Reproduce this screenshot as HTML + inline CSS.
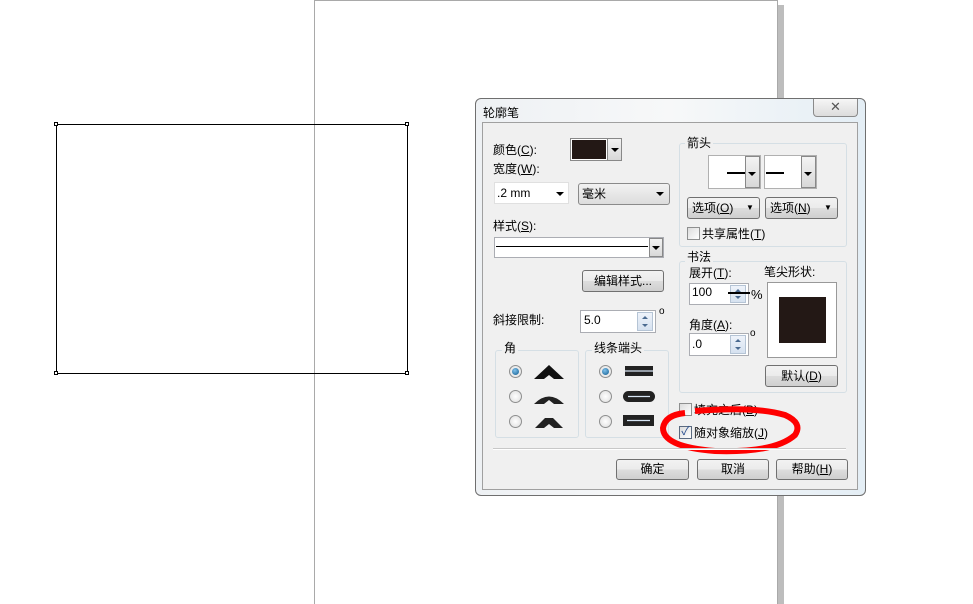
<!DOCTYPE html>
<html><head><meta charset="utf-8"><style>
*{margin:0;padding:0;box-sizing:border-box}
body{width:973px;height:604px;background:#fff;position:relative;overflow:hidden;font-family:"Liberation Sans","Noto Sans CJK SC",sans-serif;font-size:12px;color:#000}
.a{position:absolute}
.t{position:absolute;white-space:nowrap;line-height:14px}
.btn{position:absolute;border:1px solid #707070;border-radius:3px;background:linear-gradient(#f2f2f2,#ebebeb 50%,#dddddd 51%,#cfcfcf);text-align:center;line-height:18px}
.grp{position:absolute;border:1px solid #d5dfe5;border-radius:3px}
.gt{position:absolute;background:#f0f0f0;padding:0 2px;line-height:14px}
.cb{position:absolute;width:13px;height:13px;border:1px solid #8e8f8f;background:linear-gradient(135deg,#dcdcdc,#fff)}
.rd{position:absolute;width:13px;height:13px;border:1px solid #8e8f8f;border-radius:50%;background:radial-gradient(#fff,#dcdcdc)}
.rd.on::after{content:"";position:absolute;left:2px;top:2px;width:7px;height:7px;border-radius:50%;background:radial-gradient(circle at 40% 35%,#7fc0ea,#0d5a8f)}
.in{position:absolute;background:#fff;border:1px solid #abadb3}
.dd{position:absolute;width:0;height:0;border-left:4px solid transparent;border-right:4px solid transparent;border-top:4px solid #000}
.spin{position:absolute;width:16px;border:1px solid #b5c4d5;background:linear-gradient(#eef3fa,#d6e2f0)}
.spin::before{content:"";position:absolute;left:4px;top:3px;border-left:3px solid transparent;border-right:3px solid transparent;border-bottom:3px solid #4a6a90}
.spin::after{content:"";position:absolute;left:4px;bottom:3px;border-left:3px solid transparent;border-right:3px solid transparent;border-top:3px solid #4a6a90}
</style></head><body>
<div class="a" style="left:314px;top:0;width:464px;height:604px;border-left:1px solid #a9a9a9;border-right:1px solid #a9a9a9;border-top:1px solid #a9a9a9"></div>
<div class="a" style="left:778px;top:5px;width:6px;height:599px;background:#bdbdbd"></div>
<div class="a" style="left:56px;top:124px;width:352px;height:250px;border:1px solid #000"></div>
<div class="a" style="left:54px;top:122px;width:4px;height:4px;border:1px solid #000;background:#fff"></div>
<div class="a" style="left:405px;top:122px;width:4px;height:4px;border:1px solid #000;background:#fff"></div>
<div class="a" style="left:54px;top:371px;width:4px;height:4px;border:1px solid #000;background:#fff"></div>
<div class="a" style="left:405px;top:371px;width:4px;height:4px;border:1px solid #000;background:#fff"></div>
<div class="a" style="left:475px;top:98px;width:391px;height:398px;border:1px solid #6f6f6f;border-radius:6px;background:linear-gradient(90deg,#eef1f4,#f7f8f9 50%,#e4eef5)"></div>
<div class="t" style="left:483px;top:106px;font-size:12px">轮廓笔</div>
<div class="a" style="left:813px;top:99px;width:45px;height:18px;border:1px solid #8a8a8a;border-top:none;border-radius:0 0 4px 4px;background:linear-gradient(#f6f6f6,#dcdcdc);text-align:center;color:#555;font-size:13px;line-height:16px">✕</div>
<div class="a" style="left:482px;top:122px;width:376px;height:368px;background:#f0f0f0;border:1px solid #a0a0a0"></div>

<div class="t" style="left:493px;top:143px">颜色(<u>C</u>):</div>
<div class="a" style="left:570px;top:138px;width:38px;height:23px;border:1px solid #888;background:#fff;padding:1px"><div style="width:100%;height:100%;background:#231815"></div></div>
<div class="a" style="left:607px;top:138px;width:15px;height:23px;border:1px solid #888;background:linear-gradient(#f3f3f3,#d8d8d8)"></div><div class="dd" style="left:611px;top:148px"></div>
<div class="t" style="left:493px;top:162px">宽度(<u>W</u>):</div>
<div class="in" style="left:494px;top:182px;width:75px;height:22px;border-color:#e0e0e0"></div>
<div class="t" style="left:497px;top:186px">.2 mm</div><div class="dd" style="left:556px;top:192px"></div>
<div class="a" style="left:578px;top:183px;width:92px;height:22px;border:1px solid #8a8a8a;border-radius:3px;background:linear-gradient(#f2f2f2,#dcdcdc)"></div>
<div class="t" style="left:582px;top:187px">毫米</div><div class="dd" style="left:656px;top:192px"></div>
<div class="t" style="left:493px;top:219px">样式(<u>S</u>):</div>
<div class="in" style="left:494px;top:237px;width:170px;height:21px"></div>
<div class="a" style="left:496px;top:246px;width:152px;height:1px;background:#000"></div>
<div class="a" style="left:649px;top:238px;width:14px;height:19px;border:1px solid #888;background:linear-gradient(#f3f3f3,#d8d8d8)"></div><div class="dd" style="left:652px;top:246px"></div>
<div class="btn" style="left:582px;top:270px;width:82px;height:22px;line-height:20px">编辑样式...</div>
<div class="t" style="left:493px;top:313px">斜接限制:</div>
<div class="in" style="left:580px;top:310px;width:76px;height:23px"></div>
<div class="t" style="left:584px;top:313px">5.0</div>
<div class="spin" style="left:637px;top:312px;height:19px"></div>
<div class="t" style="left:659px;top:305px;font-size:10px">o</div>

<div class="grp" style="left:495px;top:350px;width:84px;height:88px"></div>
<div class="gt" style="left:502px;top:341px">角</div>
<div class="grp" style="left:585px;top:350px;width:84px;height:88px"></div>
<div class="gt" style="left:592px;top:341px">线条端头</div>
<div class="rd on" style="left:509px;top:365px"></div>
<div class="rd" style="left:509px;top:390px"></div>
<div class="rd" style="left:509px;top:415px"></div>
<div class="rd on" style="left:599px;top:365px"></div>
<div class="rd" style="left:599px;top:390px"></div>
<div class="rd" style="left:599px;top:415px"></div>
<svg class="a" style="left:534px;top:362px" width="32" height="70">
<polygon points="0,17 15,3 30,17 20,17 15,13 10,17" fill="#111"/>
<path d="M0,42 Q15,27 30,42 L20,42 L15,38 L10,42 Z" fill="#222"/>
<polygon points="1,66 11,56 19,56 29,66 20,66 15,62 10,66" fill="#222"/>
</svg>
<svg class="a" style="left:622px;top:362px" width="34" height="70">
<rect x="3" y="4" width="28" height="10" fill="#222"/><line x1="3" y1="9" x2="31" y2="9" stroke="#d8e6f5" stroke-width="1.2"/>
<rect x="1" y="29" width="32" height="11" rx="5.5" fill="#222"/><line x1="6" y1="34.5" x2="28" y2="34.5" stroke="#d8e6f5" stroke-width="1.2"/>
<rect x="1" y="53" width="31" height="11" fill="#222"/><line x1="5" y1="58.5" x2="28" y2="58.5" stroke="#d8e6f5" stroke-width="1.2"/>
</svg>

<div class="grp" style="left:679px;top:143px;width:168px;height:104px"></div>
<div class="gt" style="left:685px;top:136px">箭头</div>
<div class="in" style="left:708px;top:155px;width:53px;height:34px;border-color:#b0b0b0"></div>
<div class="a" style="left:727px;top:172px;width:18px;height:2px;background:#000"></div>
<div class="a" style="left:745px;top:156px;width:15px;height:32px;border:1px solid #888;background:linear-gradient(#f3f3f3,#d8d8d8)"></div><div class="dd" style="left:748px;top:172px"></div>
<div class="in" style="left:764px;top:155px;width:53px;height:34px;border-color:#b0b0b0"></div>
<div class="a" style="left:766px;top:172px;width:18px;height:2px;background:#000"></div>
<div class="a" style="left:801px;top:156px;width:15px;height:32px;border:1px solid #888;background:linear-gradient(#f3f3f3,#d8d8d8)"></div><div class="dd" style="left:804px;top:172px"></div>
<div class="btn" style="left:687px;top:197px;width:73px;height:22px;text-align:left;padding-left:4px;line-height:20px">选项(<u>O</u>)<span style="position:absolute;left:58px;top:0;font-size:8px">▼</span></div>
<div class="btn" style="left:765px;top:197px;width:73px;height:22px;text-align:left;padding-left:4px;line-height:20px">选项(<u>N</u>)<span style="position:absolute;left:58px;top:0;font-size:8px">▼</span></div>
<div class="cb" style="left:687px;top:227px"></div>
<div class="t" style="left:702px;top:227px">共享属性(<u>T</u>)</div>

<div class="grp" style="left:679px;top:261px;width:168px;height:132px"></div>
<div class="gt" style="left:685px;top:250px">书法</div>
<div class="t" style="left:689px;top:266px">展开(<u>T</u>):</div>
<div class="in" style="left:689px;top:283px;width:60px;height:22px"></div>
<div class="t" style="left:692px;top:285px">100</div>
<div class="spin" style="left:730px;top:285px;height:18px"></div>
<div class="a" style="left:728px;top:292px;width:22px;height:2px;background:#000"></div>
<div class="t" style="left:751px;top:288px;font-size:13px">%</div>
<div class="t" style="left:764px;top:265px">笔尖形状:</div>
<div class="a" style="left:767px;top:282px;width:70px;height:76px;border:1px solid #999;background:#fff"></div>
<div class="a" style="left:779px;top:297px;width:47px;height:46px;background:#231815"></div>
<div class="t" style="left:689px;top:318px">角度(<u>A</u>):</div>
<div class="in" style="left:689px;top:333px;width:60px;height:23px"></div>
<div class="t" style="left:692px;top:337px">.0</div>
<div class="spin" style="left:730px;top:335px;height:19px"></div>
<div class="t" style="left:750px;top:327px;font-size:10px">o</div>
<div class="btn" style="left:765px;top:365px;width:73px;height:22px;line-height:20px">默认(<u>D</u>)</div>

<div class="cb" style="left:679px;top:403px"></div>
<div class="t" style="left:694px;top:403px">填充之后(<u>B</u>)</div>
<div class="cb" style="left:679px;top:426px;border-color:#5a6a80"></div>
<div class="t" style="left:679px;top:424px;font-size:12px;color:#2a4f8f;width:13px;text-align:center">✓</div>
<div class="t" style="left:694px;top:426px">随对象缩放(<u>J</u>)</div>
<svg class="a" style="left:655px;top:403px" width="150" height="55"><path d="M30,10 Q10,12 8,25 Q8,44 60,48 Q120,50 140,32 Q148,20 130,12 Q100,3 40,8" fill="none" stroke="#f00" stroke-width="6"/></svg>

<div class="a" style="left:493px;top:448px;width:353px;height:1px;background:#c8c8c8"></div>
<div class="a" style="left:493px;top:449px;width:353px;height:1px;background:#fff"></div>
<div class="btn" style="left:616px;top:459px;width:73px;height:21px">确定</div>
<div class="btn" style="left:697px;top:459px;width:72px;height:21px">取消</div>
<div class="btn" style="left:776px;top:459px;width:72px;height:21px">帮助(<u>H</u>)</div>
</body></html>
